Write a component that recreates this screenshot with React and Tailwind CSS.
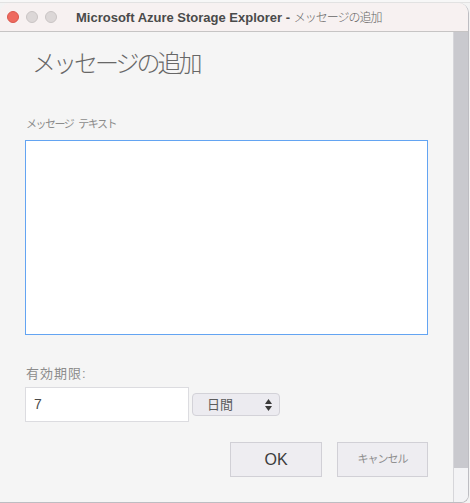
import React from "react";

const jp = { fontFamily: '"Liberation Sans", "Noto Sans CJK JP", sans-serif' };

const TrafficLights = () => (
  <div className="flex items-center gap-[7px] pl-[7px]">
    <span className="w-[12px] h-[12px] rounded-full bg-[#ee6a5f] border border-[#d9574d]" />
    <span className="w-[12px] h-[12px] rounded-full bg-[#dcd7d7] border border-[#c9c4c4]" />
    <span className="w-[12px] h-[12px] rounded-full bg-[#dcd7d7] border border-[#c9c4c4]" />
  </div>
);

export default function App() {
  return (
    <div className="w-[470px] h-[503px] bg-[#f3f3f3] overflow-hidden" style={jp}>
      <div className="h-[3px] bg-[#f7f7f7] border-b border-[#e2e2e2]" />
      <div className="h-[500px] mr-[1px] rounded-t-[10px] rounded-br-[8px] overflow-hidden border-r border-b border-[#bdbdc2] flex flex-col">
        {/* title bar */}
        <div className="h-[29px] shrink-0 bg-[#f7f1f1] border-b border-[#c6c4c4] flex items-center">
          <TrafficLights />
          <div className="ml-[19px] text-[13px] leading-none whitespace-nowrap">
            <span className="font-bold text-[#4a4a4a]">Microsoft Azure Storage Explorer - </span>
            <span className="text-[#666] text-[12px] font-light tracking-[-1px]">メッセージの追加</span>
          </div>
        </div>

        <div className="flex flex-1 min-h-0">
          {/* dialog body */}
          <div className="w-[453px] bg-[#f5f5f5] pl-[25px] pt-[16px]">
            <h1 className="text-[24px] leading-[32px] font-light text-[#676767] pl-[7px] tracking-[-3px]">メッセージの追加</h1>

            <label className="flex mt-[36px] text-[11px] leading-[16px] text-[#8c8c8c] pl-[1px] tracking-[-1.5px]">
              <span>メッセージ</span>
              <span className="w-[5px]" />
              <span>テキスト</span>
            </label>
            <textarea
              className="block mt-[8px] w-[403px] h-[195px] bg-white border border-[#63a4f2] resize-none outline-none"
              defaultValue=""
            />

            <label className="block mt-[30px] text-[13px] leading-[18px] text-[#8c8c8c] pl-[1px] tracking-[1px]">有効期限:</label>
            <div className="flex items-center mt-[4px]">
              <div className="w-[164px] h-[35px] bg-white border border-[#dcdce0] flex items-center pl-[8px] text-[14px] text-[#4a4a4a]">
                7
              </div>
              <div className="ml-[3px] w-[88px] h-[23px] rounded-[4px] bg-[#ecebf0] border border-[#d3d2d8] flex items-center justify-between pl-[14px] pr-[6px] text-[13px] text-[#5c5c5c]">
                <span>日間</span>
                <svg width="9" height="14" viewBox="0 0 9 14">
                  <path d="M4.5 1 L8 6 L1 6 Z" fill="#3a3a3a" />
                  <path d="M4.5 13 L8 8 L1 8 Z" fill="#3a3a3a" />
                </svg>
              </div>
            </div>

            <div className="flex justify-end gap-[15px] mt-[20px] w-[403px]">
              <button className="w-[92px] h-[35px] bg-[#eeedf1] border border-[#d1d0d6] text-[16px] text-[#3c3c3c]">OK</button>
              <button className="w-[91px] h-[35px] bg-[#eeedf1] border border-[#d1d0d6] text-[11px] text-[#8f8f8f] tracking-[-1px]">キャンセル</button>
            </div>
          </div>

          {/* scrollbar track */}
          <div className="flex-1 flex flex-col border-l border-[#d6d6da]">
            <div className="h-[436px] bg-[#c9c9ce]" />
            <div className="flex-1 bg-[#f3f3f5]" />
          </div>
        </div>
      </div>
    </div>
  );
}
